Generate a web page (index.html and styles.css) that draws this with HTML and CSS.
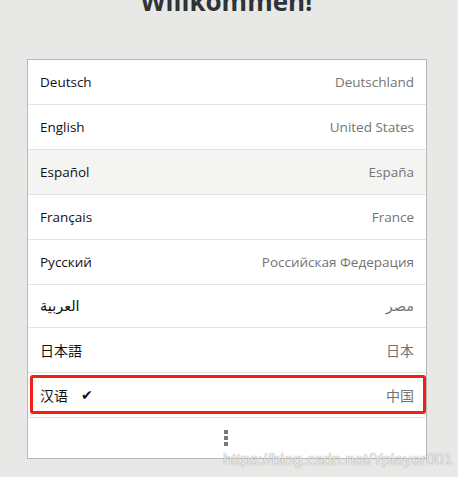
FILE: index.html
```html
<!DOCTYPE html>
<html lang="de">
<head>
<meta charset="utf-8">
<title>Willkommen</title>
<link rel="stylesheet" href="styles.css">
</head>
<body>
<main class="page">
  <h1 class="title">Willkommen!</h1>
  <ul class="lang-list">
    <li class="row"><span class="lang">Deutsch</span><span class="region">Deutschland</span></li>
    <li class="row"><span class="lang">English</span><span class="region">United States</span></li>
    <li class="row row-hover"><span class="lang">Español</span><span class="region">España</span></li>
    <li class="row"><span class="lang">Français</span><span class="region">France</span></li>
    <li class="row"><span class="lang">Русский</span><span class="region">Российская Федерация</span></li>
    <li class="row row-short"><span class="lang lang-ar">العربية</span><span class="region lang-ar">مصر</span></li>
    <li class="row"><span class="lang cjk-jp">日本語</span><span class="region cjk-jp">日本</span></li>
    <li class="row row-selected"><span class="lang cjk-sc">汉语</span><span class="check">✔</span><span class="region cjk-sc">中国</span><span class="highlight"></span></li>
    <li class="more"><span class="dots"><i></i><i></i><i></i></span></li>
  </ul>
  <div class="watermark">https://blog.csdn.net/Yplayer001</div>
</main>
</body>
</html>
```
FILE: styles.css
```css
html, body {
  margin: 0;
  padding: 0;
  background: #e8e8e7;
  height: 100%;
  overflow: hidden;
}
.page {
  display: flow-root;
  position: relative;
  height: 477px;
  font-family: "Open Sans", "DejaVu Sans", "Noto Sans CJK SC", sans-serif;
  color: #2e3436;
}
.title {
  margin: -15px 0 0;
  font-size: 26px;
  line-height: 32px;
  font-weight: 700;
  text-align: center;
  padding-right: 5px;
  color: #2e3436;
}
.lang-list {
  list-style: none;
  margin: 42px 0 0 27px;
  padding: 0;
  width: 398px;
  border: 1px solid #b9b9b7;
  background: #fff;
}
.row {
  position: relative;
  display: flex;
  align-items: center;
  height: 44px;
  padding: 0 12px;
  border-bottom: 1px solid #e3e3e2;
  font-size: 13.5px;
}
.row-short { height: 42px; }
.row-hover { background: #f4f4f3; }
.lang { color: #111; }
.region {
  margin-left: auto;
  color: #747474;
}
.lang-ar { font-family: "DejaVu Sans", sans-serif; font-size: 14.5px; }
.cjk-jp { font-family: "Noto Sans CJK JP", sans-serif; font-size: 14px; }
.cjk-sc { font-family: "Noto Sans CJK SC", sans-serif; font-size: 14px; }
.check {
  margin-left: 13px;
  font-family: "DejaVu Sans", sans-serif;
  font-size: 14px;
  color: #111;
}
.highlight {
  position: absolute;
  left: 2px;
  right: 0;
  top: 2px;
  height: 33px;
  border: 3px solid #f31f16;
  border-radius: 3px;
}
.more {
  display: flex;
  justify-content: center;
  align-items: center;
  height: 40px;
}
.dots {
  display: flex;
  flex-direction: column;
  gap: 2px;
  margin-right: 3px;
}
.dots i {
  display: block;
  width: 4px;
  height: 4px;
  background: #777;
}
.watermark {
  position: absolute;
  left: 223px;
  top: 450px;
  font-family: "Liberation Sans", sans-serif;
  font-size: 16.2px;
  color: rgba(255, 255, 255, 0.8);
  text-shadow: 0 0 1px rgba(100, 100, 100, 0.8);
}
```
